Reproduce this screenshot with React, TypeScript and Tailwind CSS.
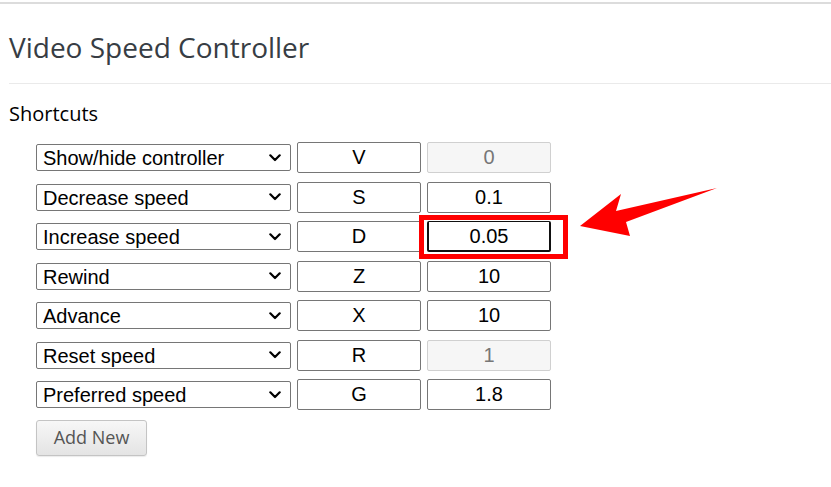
const rows = [
  { action: 'Show/hide controller', key: 'V', value: '0', disabled: true },
  { action: 'Decrease speed', key: 'S', value: '0.1' },
  { action: 'Increase speed', key: 'D', value: '0.05', focused: true },
  { action: 'Rewind', key: 'Z', value: '10' },
  { action: 'Advance', key: 'X', value: '10' },
  { action: 'Reset speed', key: 'R', value: '1', disabled: true },
  { action: 'Preferred speed', key: 'G', value: '1.8' },
];

const options = rows.map((r) => r.action);

function Chevron() {
  return (
    <svg className="pointer-events-none absolute right-[10px] top-1/2 -translate-y-1/2" width="12" height="8" viewBox="0 0 12 8">
      <path d="M1.3 1.3 L6 6 L10.7 1.3" fill="none" stroke="#000" strokeWidth="2.2" strokeLinecap="round" strokeLinejoin="round" />
    </svg>
  );
}

function ShortcutRow({ row }: { row: (typeof rows)[number] }) {
  return (
    <div className="flex items-center gap-[6px] h-[31px]">
      <div className="relative">
        <select
          defaultValue={row.action}
          className="appearance-none w-[255px] h-[27px] border border-[#767676] rounded-[2px] bg-white pl-[6px] pt-[2px] text-[20px] leading-[23px] text-black outline-none"
          style={{ fontFamily: '"Liberation Sans", Arial, sans-serif' }}
        >
          {options.map((o) => (
            <option key={o}>{o}</option>
          ))}
        </select>
        <Chevron />
      </div>
      <input
        readOnly
        value={row.key}
        className="w-[124px] h-[31px] border border-[#767676] rounded-[2px] bg-white text-center text-[20px] text-black outline-none"
        style={{ fontFamily: '"Liberation Sans", Arial, sans-serif' }}
      />
      <div className="relative">
        <input
          readOnly
          value={row.value}
          disabled={row.disabled}
          className={
            row.disabled
              ? 'w-[124px] h-[31px] border border-[#d0d0d0] rounded-[2px] bg-[#f6f6f6] text-center text-[20px] text-[#777] outline-none'
              : row.focused
                ? 'w-[124px] h-[31px] border border-x-2 border-b-2 border-[#111] rounded-[2px] bg-white text-center text-[20px] text-black outline-none'
                : 'w-[124px] h-[31px] border border-[#767676] rounded-[2px] bg-white text-center text-[20px] text-black outline-none'
          }
          style={{ fontFamily: '"Liberation Sans", Arial, sans-serif' }}
        />
        {row.focused && (
          <div className="pointer-events-none absolute left-[-8px] right-[-17px] top-[-6px] bottom-[-7px] border-[5px] border-[#ff0000]" />
        )}
      </div>
    </div>
  );
}

export default function App() {
  return (
    <div className="relative w-[831px] h-[487px] bg-white overflow-hidden">
      <div className="border-t-[2px] border-[#dcdcdc] mt-[2px]" />
      <div className="pl-[9px]">
        <h1
          className="text-[28px] leading-[36px] text-[#373d44] pt-[25px] pb-[18px] border-b border-[#eaeaea]"
          style={{ fontFamily: '"Open Sans", "Noto Sans", sans-serif' }}
        >
          Video Speed Controller
        </h1>
        <h3
          className="text-[20px] leading-[26px] text-black mt-[17px]"
          style={{ fontFamily: '"Open Sans", "Noto Sans", sans-serif' }}
        >
          Shortcuts
        </h3>
        <div className="ml-[27px] mt-[15px] flex flex-col gap-[8.5px]">
          {rows.map((r) => (
            <ShortcutRow key={r.action} row={r} />
          ))}
          <div className="pt-[1px]">
            <button
              className="w-[111px] h-[36px] border border-[#c4c4c4] rounded-[3px] bg-gradient-to-b from-[#f7f7f7] to-[#e4e4e4] text-[18px] text-[#555] shadow-[0_1px_1px_rgba(0,0,0,0.08)]"
              style={{ fontFamily: '"Open Sans", "Noto Sans", sans-serif' }}
            >
              Add New
            </button>
          </div>
        </div>
      </div>

      {/* annotation arrow */}
      <svg className="pointer-events-none absolute left-0 top-0" width="831" height="487" viewBox="0 0 831 487">
        <polygon points="580,226 621,194 616,211 717,188 626,222 630,236" fill="#ff0000" />
      </svg>
    </div>
  );
}
